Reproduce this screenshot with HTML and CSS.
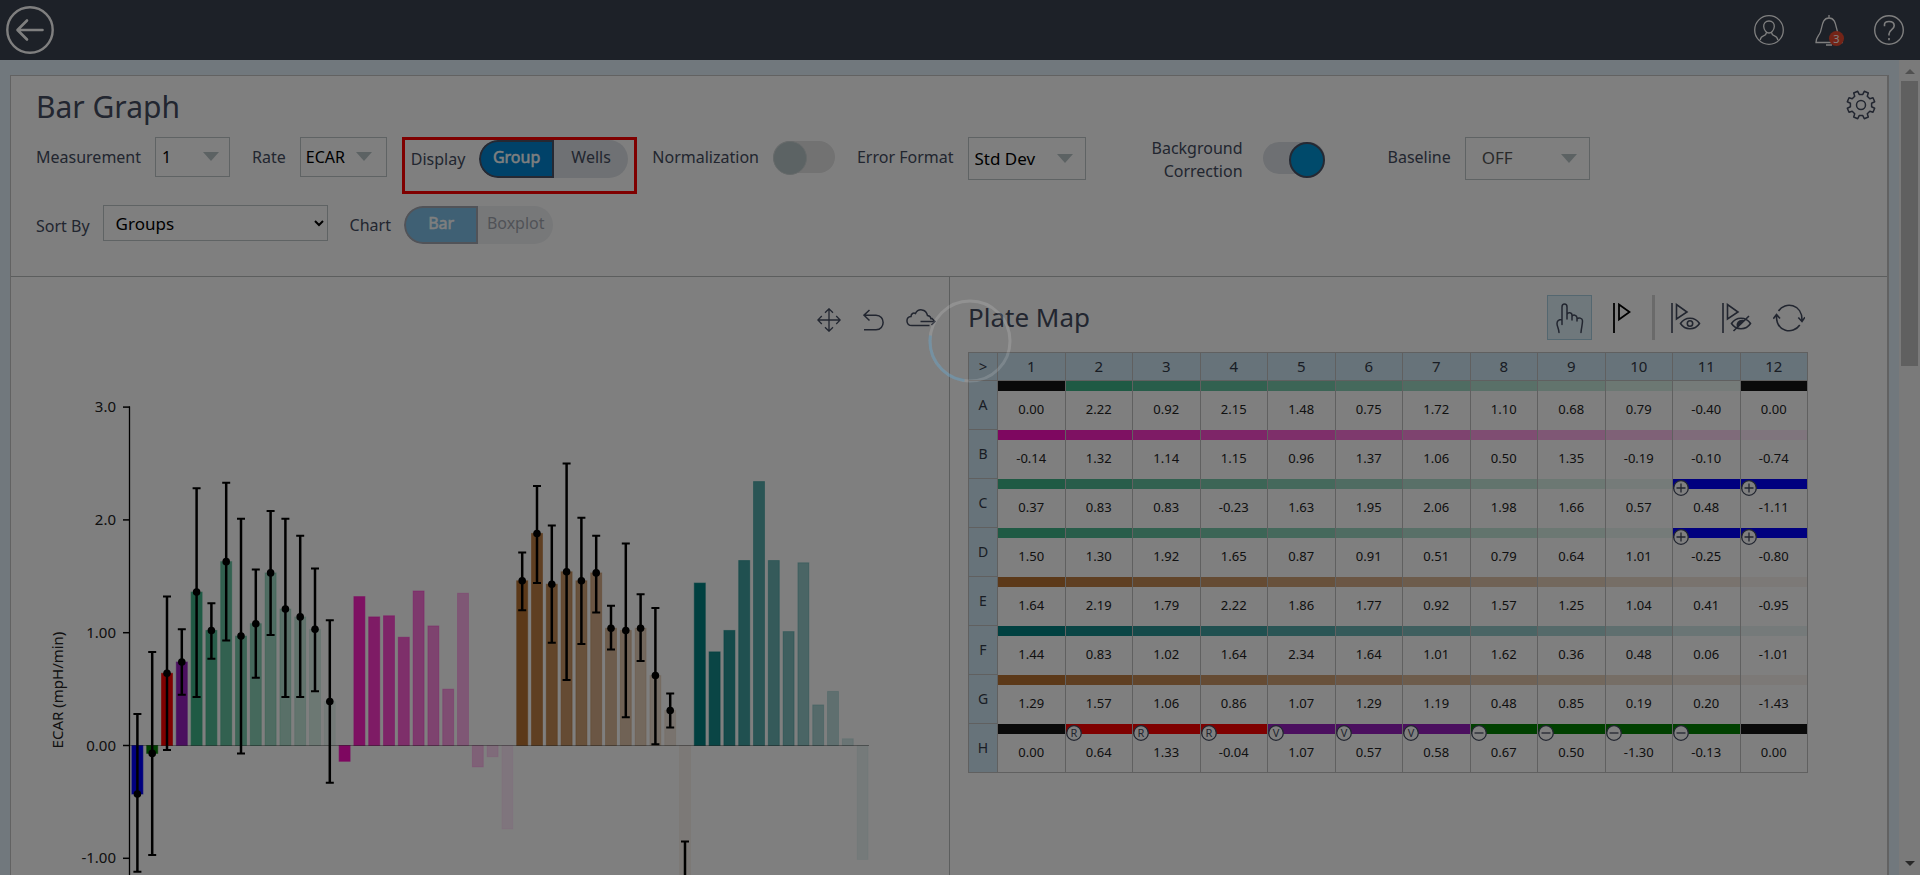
FILE: index.html
```html
<!DOCTYPE html>
<html lang="en">
<head>
<meta charset="utf-8">
<title>Bar Graph</title>
<link rel="stylesheet" href="styles.css">
</head>
<body>
<div class="app">
  <header class="topbar">
    <button class="icon-btn" aria-label="Back">
      <svg width="48" height="48" viewBox="0 0 48 48" fill="none" stroke="#fff"><circle cx="24" cy="24" r="22.7" stroke-width="2.4"/><path d="M36.5 24H12M21 14.5L11.5 24L21 33.500" stroke-width="2.6" stroke-linecap="round" stroke-linejoin="round"/></svg>
    </button>
    <nav class="topbar-actions">
      <button class="icon-btn" aria-label="Account">
        <svg width="30" height="30" viewBox="0 0 30 30" fill="none" stroke="#fff" stroke-width="1.3"><circle cx="15" cy="15" r="14.300"/><path d="M15 6c3.500 0 5.500 2.400 5.300 5.500-.2 3.500-2.800 6.500-5.300 6.500s-5.100-3-5.300-6.500C9.500 8.400 11.500 6 15 6zM12.300 17.500c0 2-.8 2.700-2.800 3.300-2 .6-2.800 1.600-3.400 4.200M17.700 17.500c0 2 .8 2.700 2.800 3.300 2 .6 2.800 1.600 3.400 4.200"/></svg>
      </button>
      <button class="icon-btn bell" aria-label="Notifications">
        <svg width="28" height="31" viewBox="0 0 28 31" fill="none" stroke="#fff" stroke-width="1.3"><path d="M14 0v3M1 27.500c0-4 1.500-5.500 3.500-8.500C7.500 14.500 6 3 14 3s6.500 11.500 9.500 16c2 3 3.500 4.500 3.500 8.500zM11 30h6"/></svg>
        <span class="badge">3</span>
      </button>
      <button class="icon-btn" aria-label="Help">
        <svg width="30" height="30" viewBox="0 0 30 30" fill="none" stroke="#fff" stroke-width="1.4"><circle cx="15" cy="15" r="14.300"/><path d="M10.500 11.200V9.500c0-2 1.700-3 4.500-3 3.200 0 5.200 1.500 5.200 4.200 0 4-5.200 3.800-5.200 8.300v1.500M15 23v2.200" stroke-width="1.600"/></svg>
      </button>
    </nav>
  </header>

  <div class="body">
    <main class="content">
      <div class="panel">
        <section class="controls">
          <div class="title-row">
            <h1>Bar Graph</h1>
            <button class="icon-btn" aria-label="Settings">
              <svg width="30" height="30" viewBox="-16 -16 32 32" fill="none" stroke="#444c60" stroke-width="1.6" stroke-linejoin="round"><path d="M1.900 11.300L3.500 14.600L7.800 12.800L6.700 9.400L9.400 6.700L12.800 7.800L14.600 3.500L11.300 1.900V-1.900L14.600 -3.500L12.800 -7.800L9.400 -6.700L6.700 -9.400L7.800 -12.800L3.500 -14.600L1.900 -11.300H-1.900L-3.500 -14.600L-7.800 -12.800L-6.700 -9.400L-9.400 -6.700L-12.800 -7.800L-14.600 -3.500L-11.300 -1.900V1.900L-14.600 3.500L-12.800 7.800L-9.400 6.700L-6.700 9.400L-7.800 12.800L-3.500 14.600L-1.900 11.300Z"/><circle r="4.800"/></svg>
            </button>
          </div>
          <div class="row">
            <div class="field"><label for="meas">Measurement</label><span class="drop drop-s"><select id="meas"><option>1</option></select></span></div>
            <div class="field gap-m"><label for="rate">Rate</label><span class="drop drop-m"><select id="rate"><option>ECAR</option></select></span></div>
            <div class="field highlight gap-s"><span>Display</span>
              <div class="segmented"><button class="on">Group</button><button>Wells</button></div></div>
            <div class="field gap-s"><label for="norm">Normalization</label><input class="switch" id="norm" type="checkbox" disabled></div>
            <div class="field tall gap-m"><label for="err">Error Format</label><span class="drop drop-l"><select id="err"><option>Std Dev</option></select></span></div>
            <div class="field tall gap-xl"><label class="two-line" for="bg">Background<br>Correction</label><input class="switch" id="bg" type="checkbox" checked></div>
            <div class="field tall gap-l"><label for="base">Baseline</label><span class="drop drop-xl"><select id="base"><option>OFF</option></select></span></div>
          </div>
          <div class="row">
            <div class="field sort"><label for="sort">Sort By</label><select class="native" id="sort"><option>Groups</option></select></div>
            <div class="field chart-type"><span>Chart</span>
              <div class="segmented disabled"><button class="on" disabled>Bar</button><button disabled>Boxplot</button></div></div>
          </div>
        </section>

        <div class="split">
          <section class="chart-pane">
            <div class="chart-tools">
              <button class="icon-btn" aria-label="Pan"><svg width="24" height="24" viewBox="0 0 24 24" fill="none" stroke="#444c60" stroke-width="1.300"><path d="M12 .8V23.200M.8 12H23.200M8 4.800L12 .8L16 4.800M8 19.200L12 23.200L16 19.200M4.800 8L.8 12L4.800 16M19.200 8L23.200 12L19.200 16"/></svg></button>
              <button class="icon-btn" aria-label="Undo"><svg width="21" height="24" viewBox="0 0 21 24" fill="none" stroke="#444c60" stroke-width="1.500"><path d="M6.500 2L1 7.200L6.500 12.500M1 7.200H13C22.500 7.500 22.500 21.500 13 21.700H1"/></svg></button>
              <button class="icon-btn" aria-label="Export"><svg width="30" height="24" viewBox="0 0 30 24" fill="none" stroke="#444c60" stroke-width="1.500"><path d="M14.500 13.500H29M25.500 10L29 13.500L25.500 17M23.500 17.500H6C-.5 17.500-.5 9 5 8.500 5 5.500 7.500 4.500 9.500 5.500 12 .3 20 .5 21.500 7.500 24 8 25 9.500 25 11.500"/></svg></button>
            </div>
            <svg class="chart" id="chart" viewBox="11 340 938 600" role="img" aria-label="ECAR (mpH/min) by group"></svg>
          </section>
          <section class="plate-pane">
            <div class="plate-head">
              <h2>Plate Map</h2>
              <div class="plate-tools">
                <button class="icon-btn selected" aria-label="Select"><svg width="30" height="32" viewBox="0 0 30 32" fill="none" stroke="#444c60" stroke-width="1.500" stroke-linecap="round"><path d="M7 18V5c0-4 5-4 5 0V17M12 12.500c1-3 5-2 5 .8V18M17 14.500c1-2.500 5-1.500 5 1.200V19M22 17c1.500-2 5.500-1 5.500 1.800 0 4-1 6-1.500 11.700M7 17.500C4 17.500 2 19 2 21.500c0 3 1.500 4 2 9M7 18v4.500"/></svg></button>
                <button class="icon-btn flag" aria-label="Flag"><svg width="18" height="30" viewBox="0 0 18 30" fill="none" stroke="#000" stroke-width="1.800"><path d="M1 0V30M6 1.500V16.500L16.500 9Z"/></svg></button>
                <span class="divider"></span>
                <button class="icon-btn" aria-label="Show flagged"><svg width="30" height="30" viewBox="0 0 30 30" fill="none" stroke="#444c60" stroke-width="1.600"><path d="M1 0V30M5.500 1.500V16L16 9ZM9.500 20.500C14 13.500 24 13.500 28.500 20.500 24 27.500 14 27.500 9.500 20.500Z"/><circle cx="19" cy="20.500" r="2.700"/></svg></button>
                <button class="icon-btn" aria-label="Hide flagged"><svg width="30" height="30" viewBox="0 0 30 30" fill="none" stroke="#444c60" stroke-width="1.600"><path d="M1 0V30M5.500 1.500V16L16 9ZM9.500 20.500C14 13.500 24 13.500 28.500 20.500 24 27.500 14 27.500 9.500 20.500ZM11.500 28L27 13"/><path d="M15.500 23.500c-1-3 1-6.500 6-5.800z" fill="#444c60"/></svg></button>
                <button class="icon-btn" aria-label="Refresh"><svg width="32" height="30" viewBox="0 0 32 30" fill="none" stroke="#444c60" stroke-width="1.600"><path d="M5.500 8C12-2 29.500 1 29 17.500M25.300 14.500L29 18.500L32 14.200M26.800 22C20 32 3 29 3.500 12.500M.3 15.800L3.500 11.500L7 15.500"/></svg></button>
              </div>
            </div>
            <table class="plate">
              <thead><tr id="plate-cols"><th class="corner">&gt;</th></tr></thead>
              <tbody id="plate-rows"></tbody>
            </table>
          </section>
        </div>
      </div>
    </main>
    <div class="scrollbar" aria-hidden="true"><i class="arrow up"></i><i class="thumb"></i><i class="arrow down"></i></div>
  </div>
</div>
<div class="overlay">
  <svg class="spinner" width="84" height="84" viewBox="0 0 84 84" fill="none" stroke-width="3"><circle cx="42" cy="42" r="40" stroke="#fff" stroke-opacity=".14"/><path d="M2.400 36.500A40 40 0 0 0 36.500 81.600" stroke="#4a90bc" stroke-opacity=".4"/></svg>
</div>
<script src="app.js"></script>
</body>
</html>
```
FILE: styles.css
```css
* { box-sizing: border-box; }
body { margin: 0; font: 16px/22px "Noto Sans", "Open Sans", sans-serif; color: #444c60; }
button, select, input { font: inherit; color: inherit; margin: 0; }
h1, h2 { margin: 0; font-weight: 400; }
.app { height: 100vh; display: flex; flex-direction: column; overflow: hidden; background: #e2f0fa; }

.topbar { flex: none; height: 60px; padding: 0 16px 0 6px; background: #3a4250; display: flex; align-items: center; justify-content: space-between; }
.topbar-actions { display: flex; align-items: center; gap: 31px; }
.icon-btn { display: flex; align-items: center; justify-content: center; padding: 0; border: 0; background: none; }
.icon-btn svg { display: block; }
.bell { position: relative; }
.badge { position: absolute; right: -1px; bottom: 0; width: 15px; height: 15px; border-radius: 50%; background: #e8492f; color: #fff; font-size: 11px; line-height: 15px; text-align: center; }

.body { flex: 1; min-height: 0; display: flex; }
.content { flex: 1; min-width: 0; padding: 15px 10px 0 10px; overflow: hidden; }
.panel { background: #fff; border: 1px solid #c4c4c4; border-right-width: 2px; }

.controls { padding: 10px 11px 32px 25px; display: flex; flex-direction: column; gap: 11px; }
.title-row { display: flex; justify-content: space-between; align-items: center; margin-bottom: -1px; }
.title-row .icon-btn { align-self: flex-start; padding-top: 4px; }
h1 { font-size: 30px; line-height: 41px; }
.row { display: flex; align-items: flex-start; white-space: nowrap; }
.field { display: flex; align-items: center; gap: 14px; min-height: 40px; }
.tall { align-items: flex-start; height: 43px; line-height: 40px; }
.tall .switch { margin-top: 5px; }
.gap-s { margin-left: 15px; }
.gap-m { margin-left: 22px; }
.gap-l { margin-left: 63px; }
.gap-xl { margin-left: 66px; }
.two-line { text-align: right; line-height: 23px; margin-right: 6px; }
.highlight { border: 3px solid #f00; padding: 0 6px 13px; }
.sort, .chart-type { gap: 13px; min-height: 36px; }
.sort label { padding-top: 5px; }
.chart-type { margin-left: 22px; padding-top: 1px; }

.drop { position: relative; display: flex; height: 40px; border: 1px solid #bfc6c8; color: #000; }
.drop::after { content: ""; position: absolute; right: 10px; top: 50%; margin-top: -5px; border: 8px solid transparent; border-top: 9px solid #b9c4c6; border-bottom: 0; pointer-events: none; }
.drop select { flex: 1; min-width: 0; appearance: none; border: 0; background: none; padding: 0 0 0 6px; }
.drop-s { width: 75px; }
.drop-m { width: 87px; }
.drop-m select { padding-left: 5px; }
.drop-m::after { right: 14px; }
.drop-l { width: 118px; height: 43px; font-size: 17px; }
.drop-l::after, .drop-xl::after { right: 12px; }
.drop-xl { width: 125px; height: 43px; font-size: 17px; color: #555; }
.drop-xl select { padding-left: 16px; padding-bottom: 4px; }
.native { width: 225px; height: 36px; padding-left: 8px; border: 1px solid #bfc6c8; border-radius: 0; background: #fff; color: #000; font-size: 17px; }

.segmented { display: flex; height: 38px; width: 149px; border-radius: 19px; background: #dfe3e8; overflow: hidden; }
.segmented button { flex: 1 0 50%; padding: 0 0 5px; border: 0; background: none; }
.segmented .on { padding-bottom: 4px; background: #0084d2; color: #fff; border: 2px solid #4a5266; border-radius: 19px 0 0 19px; -webkit-text-stroke: 0.5px #fff; }
.disabled { opacity: 0.5; }

.switch { appearance: none; width: 62px; height: 32px; border-radius: 16px; background: #e4e4e4; display: flex; }
.switch::before { content: ""; width: 32px; height: 32px; border-radius: 50%; background: #b9c6c8; border: 1px solid #ccd4d5; }
.switch:checked { background: #dde1e6; justify-content: flex-end; }
.switch:checked::before { background: #0095d6; border: 2px solid #4a5266; }

.split { display: grid; grid-template-columns: calc(50% + 1px) 1fr; border-top: 1px solid #b8bcbc; }
.chart-pane { border-right: 1px solid #b8bcbc; }
.chart-tools { display: flex; justify-content: flex-end; align-items: center; gap: 22px; height: 64px; padding: 21px 13px 0 0; }
.chart { display: block; width: 100%; }
.chart text { font-size: 15px; fill: #222; }

.plate-pane { padding: 18px 79px 0 18px; }
.plate-head { display: flex; align-items: center; justify-content: space-between; height: 45px; margin-bottom: 12px; }
h2 { font-size: 26px; line-height: 35px; }
.plate-tools { display: flex; align-items: center; gap: 21px; padding-right: 3px; }
.selected { width: 45px; height: 45px; background: #dff1f9; border: 1px solid #a9cfe0; }
.divider { width: 3px; height: 45px; background: #d4d4d4; margin-right: -5px; }
.plate { width: 100%; height: 421px; table-layout: fixed; border-collapse: collapse; font-size: 13px; line-height: 18px; color: #222; }
.plate th, .plate td { border: 1px solid #c0c0c0; padding: 0; text-align: center; font-weight: 400; }
.plate th { background: #cee6f4; color: #333a48; }
.plate thead th { height: 28px; padding-bottom: 2px; font-size: 15px; }
.plate .corner { width: 29px; }
.plate tbody th { padding-bottom: 1px; font-size: 14px; }
.plate td { height: 48px; position: relative; vertical-align: top; border-top: 0; border-bottom: 0; }
.plate tbody tr:last-child td { border-bottom: 1px solid #c0c0c0; }
.strip { display: block; height: 10px; margin-bottom: 9px; }
.mark { position: absolute; left: 0; top: 1px; width: 16px; height: 16px; }

.scrollbar { flex: none; width: 21px; padding: 0 2px; background: #f4f4f4; display: flex; flex-direction: column; align-items: center; }
.thumb { width: 17px; height: 285px; margin-top: 7px; background: #c1c1c1; }
.arrow { border: 5px solid transparent; }
.up { margin-top: 4px; border-bottom-color: #a0a0a0; }
.down { margin: auto 0 4px; border-top-color: #505050; }

.overlay { position: fixed; inset: 0; background: rgba(0, 0, 0, 0.5); }
.spinner { position: absolute; left: calc(50% - 32px); top: 299px; }
```
FILE: app.js
```js
const MINT = "#3eb489", PINK = "#fc0fc0", COPPER = "#b87333", TEAL = "#008080";
const BLACK = "#141414", BLUE = "#0000ff", RED = "#ff0000", VIOLET = "#961ebe", GREEN = "#008000";

/* Plate map */
const plate = {
  A: "0.00 2.22 0.92 2.15 1.48 0.75 1.72 1.10 0.68 0.79 -0.40 0.00",
  B: "-0.14 1.32 1.14 1.15 0.96 1.37 1.06 0.50 1.35 -0.19 -0.10 -0.74",
  C: "0.37 0.83 0.83 -0.23 1.63 1.95 2.06 1.98 1.66 0.57 0.48 -1.11",
  D: "1.50 1.30 1.92 1.65 0.87 0.91 0.51 0.79 0.64 1.01 -0.25 -0.80",
  E: "1.64 2.19 1.79 2.22 1.86 1.77 0.92 1.57 1.25 1.04 0.41 -0.95",
  F: "1.44 0.83 1.02 1.64 2.34 1.64 1.01 1.62 0.36 0.48 0.06 -1.01",
  G: "1.29 1.57 1.06 0.86 1.07 1.29 1.19 0.48 0.85 0.19 0.20 -1.43",
  H: "0.00 0.64 1.33 -0.04 1.07 0.57 0.58 0.67 0.50 -1.30 -0.13 0.00"
};
const fade = (color, n) => Array.from({ length: n }, (_, i) => [color, 1 - i / n]);
const solid = (color, n, mark) => Array.from({ length: n }, () => [color, 1, mark]);
const strips = {
  A: [...solid(BLACK, 1), ...fade(MINT, 10), ...solid(BLACK, 1)],
  B: fade(PINK, 12),
  C: [...fade(MINT, 10), ...solid(BLUE, 2, "+")],
  D: [...fade(MINT, 10), ...solid(BLUE, 2, "+")],
  E: fade(COPPER, 12),
  F: fade(TEAL, 12),
  G: fade(COPPER, 12),
  H: [...solid(BLACK, 1), ...solid(RED, 3, "R"), ...solid(VIOLET, 3, "V"), ...solid(GREEN, 4, "-"), ...solid(BLACK, 1)]
};
const signs = {
  "+": '<path d="M8 3.500V12.500M3.500 8H12.500"/>',
  "-": '<path d="M3.500 8H12.500"/>',
  "V": '<text x="8" y="12" text-anchor="middle" font-size="11" stroke="none" fill="#444c60">V</text>',
  "R": '<text x="8" y="12" text-anchor="middle" font-size="11" stroke="none" fill="#444c60">R</text>'
};
const markSvg = m => m ? `<svg class="mark" viewBox="0 0 16 16" fill="none" stroke="#444c60" stroke-width="1.300"><circle cx="8" cy="8" r="7.300" fill="#fff"/>${signs[m]}</svg>` : "";

document.getElementById("plate-cols").insertAdjacentHTML("beforeend",
  Array.from({ length: 12 }, (_, i) => `<th>${i + 1}</th>`).join(""));
document.getElementById("plate-rows").innerHTML = Object.entries(plate).map(([name, values]) =>
  `<tr><th>${name}</th>` + values.split(" ").map((v, i) => {
    const [color, alpha, mark] = strips[name][i];
    return `<td><span class="strip" style="background:${color};opacity:${alpha}"></span>${markSvg(mark)}${v}</td>`;
  }).join("") + "</tr>").join("");

/* Bar chart: [value, error low, error high] */
const ZERO = 744.5, UNIT = 112.8, FIRST = 137.400, PITCH = 14.8;
const series = [
  [BLUE, [[-0.43, -1.12, 0.28]]],
  [GREEN, [[-0.07, -0.97, 0.83]]],
  [RED, [[0.64, -0.04, 1.32]]],
  [VIOLET, [[0.74, 0.45, 1.03]]],
  [MINT, [[1.36, 0.43, 2.28], [1.02, 0.77, 1.26], [1.63, 0.93, 2.33], [0.97, -0.07, 2.01], [1.08, 0.60, 1.56],
    [1.53, 0.98, 2.08], [1.21, 0.43, 2.01], [1.14, 0.43, 1.86], [1.03, 0.48, 1.57], [0.39, -0.33, 1.11]]],
  [PINK, [[-0.14], [1.32], [1.14], [1.15], [0.96], [1.37], [1.06], [0.50], [1.35], [-0.19], [-0.10], [-0.74]]],
  [COPPER, [[1.46, 1.20, 1.71], [1.88, 1.44, 2.30], [1.43, 0.91, 1.95], [1.54, 0.58, 2.50], [1.46, 0.90, 2.02],
    [1.53, 1.18, 1.86], [1.04, 0.85, 1.24], [1.02, 0.25, 1.79], [1.04, 0.75, 1.34], [0.62, 0.01, 1.22],
    [0.31, 0.16, 0.46], [-1.19, -1.53, -0.85]]],
  [TEAL, [[1.44], [0.83], [1.02], [1.64], [2.34], [1.64], [1.01], [1.62], [0.36], [0.48], [0.06], [-1.01]]]
];
const y = v => ZERO - v * UNIT;
let bars = "", errors = "", index = 0;
series.forEach(([color, points]) => points.forEach(([v, lo, hi], i) => {
  const x = FIRST + PITCH * index++;
  const alpha = 1 - i / points.length;
  bars += `<rect x="${x - 5.5}" y="${Math.min(y(v), ZERO)}" width="11" height="${Math.abs(v) * UNIT}" fill="${color}" stroke="${color}" fill-opacity="${alpha}" stroke-opacity="${alpha * 0.6}"/>`;
  if (lo !== undefined) {
    errors += `<path d="M${x} ${y(lo)}V${y(hi)}" stroke-width="2.500"/><path d="M${x - 4} ${y(lo)}h8M${x - 4} ${y(hi)}h8" stroke-width="2"/><circle cx="${x}" cy="${y(v)}" r="3.800" stroke="none"/>`;
  }
}));
const ticks = [["3.0", 3], ["2.0", 2], ["1.00", 1], ["0.00", 0], ["-1.00", -1]].map(([t, v]) =>
  `<path d="M123 ${y(v)}H130" stroke="#000" stroke-width="1.500"/><text x="116" y="${y(v) + 5}" text-anchor="end">${t}</text>`).join("");
document.getElementById("chart").innerHTML =
  bars + `<path d="M130 ${ZERO}H869" stroke="#000" stroke-opacity=".35"/>` +
  '<path d="M129.500 405.500V940" stroke="#000" stroke-width="1.300"/>' + ticks +
  `<g stroke="#000">${errors}</g>` +
  '<text transform="translate(63 689) rotate(-90)" text-anchor="middle">ECAR (mpH/min)</text>';
```
